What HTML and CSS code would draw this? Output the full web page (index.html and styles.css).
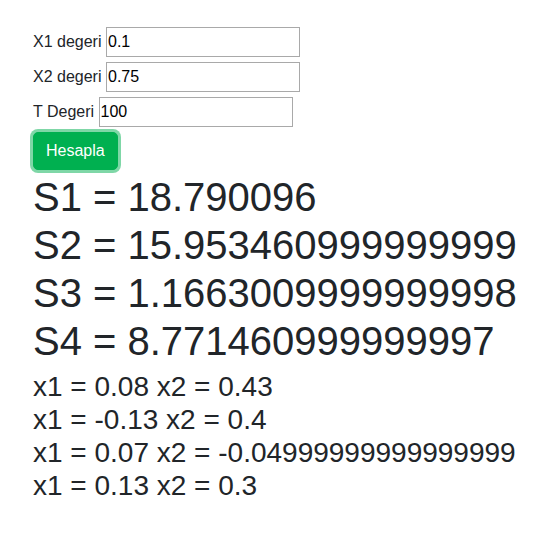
FILE: index.html
```html
<!DOCTYPE html>
<html lang="tr">
<head>
<meta charset="utf-8">
<title>Hesapla</title>
<link rel="stylesheet" href="styles.css">
</head>
<body>
<div class="page">
  <form class="form">
    <div class="row"><label for="x1">X1 degeri</label><input id="x1" type="text" value="0.1"></div>
    <div class="row"><label for="x2">X2 degeri</label><input id="x2" type="text" value="0.75"></div>
    <div class="row"><label for="t">T Degeri</label><input id="t" type="text" value="100"></div>
    <div class="row"><button type="button" class="btn">Hesapla</button></div>
  </form>
  <div class="results">
    <div class="s">S1 = 18.790096</div>
    <div class="s">S2 = 15.953460999999999</div>
    <div class="s">S3 = 1.1663009999999998</div>
    <div class="s">S4 = 8.771460999999997</div>
  </div>
  <div class="roots">
    <div class="x">x1 = 0.08 x2 = 0.43</div>
    <div class="x">x1 = -0.13 x2 = 0.4</div>
    <div class="x">x1 = 0.07 x2 = -0.04999999999999999</div>
    <div class="x">x1 = 0.13 x2 = 0.3</div>
  </div>
</div>
</body>
</html>
```

FILE: styles.css
```css
html, body {
  margin: 0;
  padding: 0;
  background: #ffffff;
}
body {
  font-family: "Liberation Sans", Arial, sans-serif;
  color: #212529;
}
.page {
  padding: 27px 0 0 33px;
}
.form {
  display: flex;
  flex-direction: column;
  gap: 5px;
  margin: 0;
}
.row {
  display: flex;
  align-items: center;
  gap: 4.5px;
  font-size: 16px;
}
.row label {
  font-size: 16px;
}
.row input {
  box-sizing: border-box;
  width: 194px;
  height: 30px;
  margin: 0;
  padding: 0 1px;
  border: 1px solid #a9a9a9;
  border-radius: 0;
  font-family: "Liberation Sans", Arial, sans-serif;
  font-size: 16px;
  color: #000;
  background: #fff;
  outline: none;
}
.btn {
  margin: 0;
  padding: 6px 12px;
  border: 1px solid #00b050;
  border-radius: 5px;
  background: #00b050;
  color: #ffffff;
  font-family: "Liberation Sans", Arial, sans-serif;
  font-size: 16px;
  line-height: 24px;
  box-shadow: 0 0 0 3px rgba(0, 176, 80, 0.5);
}
.results {
  margin-top: 3px;
}
.s {
  font-size: 40px;
  line-height: 48px;
}
.roots {
  margin-top: 5px;
}
.x {
  font-size: 28px;
  line-height: 33px;
}
```
